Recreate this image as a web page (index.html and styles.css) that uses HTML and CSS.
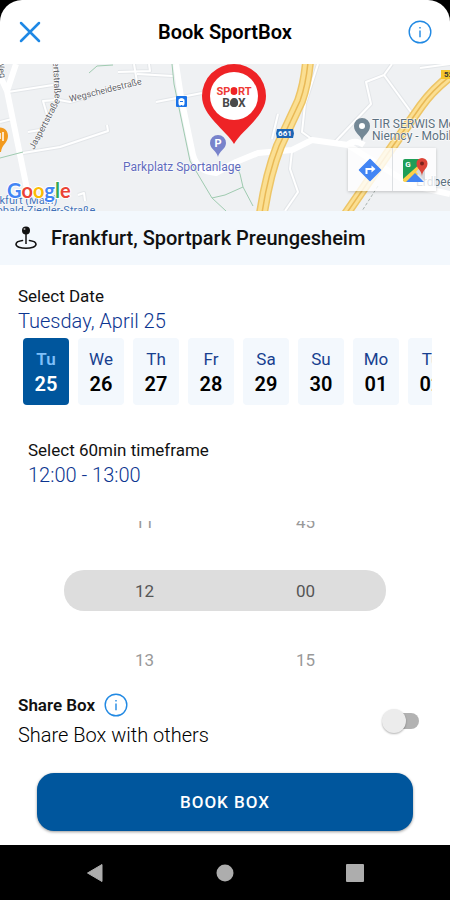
FILE: index.html
```
<!DOCTYPE html>
<html lang="en">
<head>
    <meta charset="UTF-8">
    <meta name="viewport" content="width=device-width, initial-scale=1.0">
    <title>Book SportBox</title>
    <link rel="stylesheet" href="styles.css">
</head>
<body>
    <div class="app">
        <header class="header">
            <button type="button" class="icon-btn" aria-label="Close">
                <svg width="24" height="24" viewBox="0 0 24 24"><path d="M3 3l18 18M21 3L3 21" stroke="#1e88e5" stroke-width="2.5" stroke-linecap="round"/></svg>
            </button>
            <h1>Book SportBox</h1>
            <button type="button" class="icon-btn" aria-label="Info">
                <svg width="24" height="24" viewBox="0 0 24 24" fill="none" stroke="#2189e3"><circle cx="12" cy="12" r="10.8" stroke-width="1.4"/><path d="M12 10.500v6.800M12 7v1.600" stroke-width="1.400"/></svg>
            </button>
        </header>

        <main>
            <section class="map">
                <svg class="map-canvas" viewBox="0 0 450 147" preserveAspectRatio="xMidYMid slice">
                    <rect width="450" height="147" fill="#eff1f3"/>

                    <!-- side streets -->
                    <g class="street-edge">
                        <path d="M54 0L56 33M56 36L43 37L48 54L40 66L28 68M54 35L70 38L137 18L134 0M118 8L150 7L149 0M137 10L173 12"/>
                        <path d="M8 28L53 21M0 58L12 55M23 89L60 83L108 67L107 61M156 38L202 29M78 131L84 129L85 137"/>
                        <path d="M318 0L305 40L302 68L313 76M392 0L384 11L366 18L371 40L335 78M384 11L411 48M292 87L290 105L298 128L285 147M278 50L272 75M420 4L450 0"/>
                    </g>
                    <g class="street">
                        <path d="M54 0L56 33M56 36L43 37L48 54L40 66L28 68M54 35L70 38L137 18L134 0M118 8L150 7L149 0M137 10L173 12"/>
                        <path d="M8 28L53 21M0 58L12 55M23 89L60 83L108 67L107 61M156 38L202 29M78 131L84 129L85 137"/>
                        <path d="M318 0L305 40L302 68L313 76M392 0L384 11L366 18L371 40L335 78M384 11L411 48M292 87L290 105L298 128L285 147M278 50L272 75M420 4L450 0"/>
                    </g>

                    <!-- main roads -->
                    <g class="road">
                        <path d="M16 0L7 27L28 130M0 12L7 27"/>
                        <path d="M176 0L181 33L193 91Q198 108 216 109L236 98L258 89L292 86L312 76L348 81L392 109L414 122L450 130"/>
                        <path d="M346 82Q354 74 364 81"/>
                    </g>

                    <!-- paths through the park -->
                    <g class="trail">
                        <path d="M89 9L97 2L113 1M172 0L174 20L190 97L212 134L225 131L243 123L240 110L236 102M243 123L253 142M212 134L226 147M0 94L23 88"/>
                        <path d="M378 122L362 147" stroke-dasharray="3 2" stroke="#aab4b0"/>
                    </g>

                    <!-- motorways -->
                    <g fill="none">
                        <path d="M308 -2Q306 20 300 37L279 82Q268 110 262 149" stroke="#edc567" stroke-width="12"/>
                        <path d="M308 -2Q306 20 300 37L279 82Q268 110 262 149" stroke="#fbdf92" stroke-width="9"/>
                        <path d="M308 -2Q306 20 300 37L279 82Q268 110 262 149" stroke="#e9b956" stroke-width="1.5"/>
                        <path d="M453 10Q433 25 421 42L388 89L346 150" stroke="#edc567" stroke-width="10"/>
                        <path d="M453 10Q433 25 421 42L388 89L346 150" stroke="#fbdf92" stroke-width="7"/>
                        <path d="M453 10Q433 25 421 42L388 89L346 150" stroke="#e9b956" stroke-width="1.5"/>
                    </g>

                    <!-- road shields -->
                    <path d="M277 65h16l1 4.500l-1 4.500h-16l-1-4.500z" fill="#1d65b5"/>
                    <text x="285" y="72" class="shield" fill="#fff">661</text>
                    <rect x="441" y="6" width="20" height="9" fill="#f5c52c"/>
                    <text x="451" y="13" class="shield" fill="#333">521</text>

                    <!-- bus stop -->
                    <rect x="176" y="32" width="11" height="11" rx="1" fill="#1a73e8"/>
                    <path d="M179 35.500q2.500-2 5 0v5h-5zM180 40v2M183 40v2" fill="#fff" stroke="#fff"/>
                    <path d="M180 37.500h3" stroke="#1a73e8"/>

                    <!-- street names -->
                    <text class="street-name" transform="translate(70 38) rotate(-14)">Wegscheidestraße</text>
                    <text class="street-name" transform="translate(34 86) rotate(-62)">Jaspertstraße</text>
                    <text class="street-name" transform="translate(52 -20) rotate(87)">Gelbertstraße</text>
                    <text class="street-name" transform="translate(-3 -3) rotate(80)">Weg</text>

                    <!-- places -->
                    <path d="M0 63.500c5 0 8 4 8 8.500 0 7-6 8-7 16h-2z" fill="#f29a1f"/>
                    <path d="M0 69v6M3 68v9" stroke="#fff" stroke-width="1.500"/>
                    <path d="M218 93c-1-6-8-8-8-14a8 8 0 0 1 16 0c0 6-7 8-8 14z" fill="#7883cb"/>
                    <text x="218" y="83" class="poi-letter">P</text>
                    <text x="123" y="107" class="place place-park">Parkplatz Sportanlage</text>
                    <path d="M362 77c-1-6-8-8-8-15a8 8 0 0 1 16 0c0 7-7 9-8 15z" fill="#748896"/>
                    <circle cx="362" cy="62" r="3" fill="#fff"/>
                    <text x="372" y="64" class="place">TIR SERWIS Mobil</text>
                    <text x="372" y="76" class="place">Niemcy - Mobilny</text>
                    <text x="416" y="122" class="place">Erdbeer</text>
                    <text x="-22" y="140" class="place place-transit">Frankfurt (Main)</text>
                    <text x="-22" y="150" class="place place-transit">Theobald-Ziegler-Straße</text>

                    <text x="7" y="134" class="google"><tspan fill="#4285f4">G</tspan><tspan fill="#ea4335">o</tspan><tspan fill="#fbbc05">o</tspan><tspan fill="#4285f4">g</tspan><tspan fill="#34a853">l</tspan><tspan fill="#ea4335">e</tspan></text>

                    <!-- SportBox marker -->
                    <path d="M234 80C226 66 202 52 202 32a32 32 0 0 1 64 0c0 20-24 34-32 48z" fill="#ee2326"/>
                    <circle cx="234" cy="32" r="24" fill="#fff"/>
                    <text x="234" y="31" class="logo" fill="#ee3a35">SPORT</text>
                    <text x="234" y="43" class="logo logo-box" fill="#4a4a4a">BOX</text>
                    <rect x="231" y="24" width="6" height="6" rx="1" fill="#ee2326"/>
                    <circle cx="234" cy="39" r="4" fill="#4a4a4a"/>
                </svg>
                <div class="map-tools">
                    <button type="button" aria-label="Directions">
                        <svg width="24" height="24" viewBox="0 0 24 24"><path d="M12 1.500L22.500 12L12 22.500L1.500 12z" fill="#4285f4" stroke="#4285f4" stroke-width="1.500" stroke-linejoin="round"/><path d="M8.500 16v-5h6" fill="none" stroke="#fff" stroke-width="2"/><path d="M13.500 7.500l4 3.500l-4 3.500z" fill="#fff"/></svg>
                    </button>
                    <button type="button" aria-label="Open in Google Maps">
                        <svg width="26" height="26" viewBox="0 0 26 26">
                            <path d="M3 3h20v20H3z" fill="#e8eaed"/>
                            <path d="M1 4q0-2 2-2h15v6L2 24q-1 0-1-2z" fill="#1e9e57"/>
                            <path d="M1 22L19 6l3 7L5 25H3q-2 0-2-2z" fill="#fdd04b"/>
                            <path d="M4 25l9-9l9 9z" fill="#4285f4"/>
                            <path d="M14 15l5-6l4 4v11z" fill="#d5d8dc"/>
                            <path d="M20 19c-.5-6-5.500-7-5.500-12.500a5.500 5.500 0 0 1 11 0C25.500 12 20.500 13 20 19z" fill="#dc4437"/>
                            <circle cx="20" cy="6.500" r="2" fill="#7b231c"/>
                            <text x="6" y="10" class="maps-g">G</text>
                        </svg>
                    </button>
                </div>
            </section>

            <section class="location">
                <svg width="22" height="24" viewBox="0 0 22 24" fill="none" stroke="#111">
                    <circle cx="11" cy="4.500" r="4" fill="#111" stroke="none"/>
                    <circle cx="9.500" cy="3" r="1" fill="#aaa" stroke="none"/>
                    <path d="M11 8v10" stroke-width="1.500"/>
                    <path d="M7.500 14.500C3.500 15 1 16.500 1 18.300C1 20.700 5.500 22.300 11 22.300s10-1.600 10-4c0-1.800-2.500-3.300-6.500-3.800" stroke-width="1.600" stroke-linecap="round"/>
                </svg>
                <h2>Frankfurt, Sportpark Preungesheim</h2>
            </section>

            <section class="date">
                <p class="label">Select Date</p>
                <p class="value">Tuesday, April 25</p>
                <div class="days">
                    <button type="button" class="day active"><span>Tu</span><b>25</b></button>
                    <button type="button" class="day"><span>We</span><b>26</b></button>
                    <button type="button" class="day"><span>Th</span><b>27</b></button>
                    <button type="button" class="day"><span>Fr</span><b>28</b></button>
                    <button type="button" class="day"><span>Sa</span><b>29</b></button>
                    <button type="button" class="day"><span>Su</span><b>30</b></button>
                    <button type="button" class="day"><span>Mo</span><b>01</b></button>
                    <button type="button" class="day"><span>Tu</span><b>02</b></button>
                </div>
            </section>

            <section class="time">
                <p class="label">Select 60min timeframe</p>
                <p class="value">12:00 - 13:00</p>
            </section>

            <div class="picker">
                <div class="picker-row"><span>11</span><span>45</span></div>
                <div class="picker-row selected"><span>12</span><span>00</span></div>
                <div class="picker-row"><span>13</span><span>15</span></div>
            </div>

            <section class="share">
                <div class="share-text">
                    <div class="share-title">
                        <h3>Share Box</h3>
                        <button type="button" class="icon-btn" aria-label="About sharing">
                            <svg width="24" height="24" viewBox="0 0 24 24" fill="none" stroke="#2189e3"><circle cx="12" cy="12" r="10.8" stroke-width="1.4"/><path d="M12 10.500v6.800M12 7v1.600" stroke-width="1.400"/></svg>
                        </button>
                    </div>
                    <label for="share">Share Box with others</label>
                </div>
                <input type="checkbox" id="share" class="switch" role="switch">
            </section>

            <div class="action">
                <button type="submit" class="book">BOOK BOX</button>
            </div>
        </main>
    </div>

    <nav class="navbar">
        <button type="button" aria-label="Back"><svg width="20" height="20" viewBox="0 0 20 20"><path d="M2.500 10L17 1.500v17z" fill="#adadad" stroke="#adadad" stroke-linejoin="round"/></svg></button>
        <button type="button" aria-label="Home"><svg width="20" height="20" viewBox="0 0 20 20"><circle cx="10" cy="10" r="8.500" fill="#adadad"/></svg></button>
        <button type="button" aria-label="Recent apps"><svg width="20" height="20" viewBox="0 0 20 20"><rect x="1" y="1" width="18" height="18" rx="1" fill="#adadad"/></svg></button>
    </nav>
</body>
</html>
```
FILE: styles.css
```
* {
    box-sizing: border-box;
}

body {
    font-family: Roboto, "Liberation Sans", sans-serif;
    background-color: #000;
    color: #111;
    margin: 0;
    min-height: 100vh;
    display: flex;
    flex-direction: column;
}

h1, h2, h3, p {
    margin: 0;
}

button {
    font-family: inherit;
    border: none;
    background: none;
    padding: 0;
    cursor: pointer;
}

svg {
    display: block;
}

.app {
    flex: 1;
    background-color: #fff;
    border-radius: 22px 22px 0 0;
}

/* header */
.header {
    display: flex;
    align-items: center;
    justify-content: space-between;
    height: 64px;
    padding: 0 18px;
}

.header h1 {
    font-size: 20px;
    font-weight: 600;
    line-height: 26px;
    color: #000;
}

/* map */
.map {
    position: relative;
    height: 147px;
    overflow: hidden;
}

.map-canvas {
    width: 100%;
    height: 100%;
}

.street-edge, .street, .road, .trail {
    fill: none;
    stroke-linejoin: round;
}

.street-edge {
    stroke: #e3e6e9;
    stroke-width: 4;
}

.street {
    stroke: #fff;
    stroke-width: 2;
}

.road {
    stroke: #fff;
    stroke-width: 6;
}

.trail {
    stroke: #9fcbb0;
    stroke-width: 1;
}

.shield {
    font-size: 8px;
    font-weight: 700;
    text-anchor: middle;
}

.street-name {
    font-size: 9px;
    fill: #5f6368;
    stroke: #fff;
    stroke-width: 1px;
    paint-order: stroke;
}

.place {
    font-size: 12px;
    fill: #5b7080;
    stroke: #fff;
    stroke-width: 1px;
    paint-order: stroke;
}

.place-park {
    fill: #5f6bbd;
}

.place-transit {
    font-size: 11px;
    fill: #4272b8;
}

.poi-letter {
    font-size: 11px;
    font-weight: 700;
    fill: #fff;
    text-anchor: middle;
}

.google {
    font-family: Lato, sans-serif;
    font-size: 20px;
    font-weight: 700;
    stroke: #fff;
    stroke-width: 2px;
    paint-order: stroke;
}

.logo {
    font-size: 11px;
    font-weight: 700;
    text-anchor: middle;
}

.logo-box {
    font-size: 12px;
}

.maps-g {
    font-size: 8px;
    font-weight: 700;
    fill: #fff;
    text-anchor: middle;
}

.map-tools {
    position: absolute;
    right: 14px;
    bottom: 20px;
    display: flex;
    background-color: rgba(255, 255, 255, 0.8);
    box-shadow: 0 1px 3px rgba(0, 0, 0, 0.2);
}

.map-tools button {
    display: flex;
    align-items: center;
    justify-content: center;
    width: 44px;
    height: 43px;
}

.map-tools button + button {
    border-left: 1px solid #dcdfe2;
}

/* location */
.location {
    display: flex;
    align-items: center;
    gap: 14px;
    min-height: 54px;
    padding: 0 15px;
    background-color: #f3f8fd;
}

.location h2 {
    font-size: 20px;
    font-weight: 500;
}

/* date and time */
.label {
    font-size: 17px;
    line-height: 22px;
}

.value {
    font-size: 20px;
    font-weight: 300;
    line-height: 28px;
    color: #0c3590;
}

.date {
    padding: 20px 18px 0;
}

.days {
    display: flex;
    gap: 9px;
    margin-top: 3px;
    padding-left: 5px;
    overflow: hidden;
}

.day {
    flex: 0 0 46px;
    display: flex;
    flex-direction: column;
    align-items: center;
    padding: 9px 0 8px;
    border-radius: 4px;
    background-color: #f3f8fd;
    color: #17408f;
    font-size: 17px;
    line-height: 25px;
}

.day b {
    font-size: 20px;
    font-weight: 600;
    color: #000;
}

.day.active {
    background-color: #00569d;
    color: #7fc0fa;
    font-weight: 600;
}

.day.active b {
    color: #fff;
}

.time {
    padding: 34px 28px 0;
}

/* time picker */
.picker {
    display: flex;
    flex-direction: column;
    justify-content: center;
    gap: 28px;
    height: 150px;
    margin: 32px 64px 0;
    padding-bottom: 11px;
    overflow: hidden;
}

.picker-row {
    flex: none;
    display: grid;
    grid-template-columns: 1fr 1fr;
    align-items: center;
    height: 41px;
    border-radius: 20px;
    font-size: 17px;
    text-align: center;
    color: #999;
}

.picker-row.selected {
    background-color: #ddd;
    color: #555;
}

/* share */
.share {
    display: flex;
    align-items: center;
    justify-content: space-between;
    padding: 22px 31px 0 18px;
}

.share-title {
    display: flex;
    align-items: center;
    gap: 9px;
}

.share h3 {
    font-size: 17px;
    font-weight: 600;
}

.share label {
    display: block;
    margin-top: 4px;
    font-size: 20px;
    font-weight: 300;
    line-height: 28px;
    color: #000;
}

.switch {
    appearance: none;
    position: relative;
    width: 34px;
    height: 16px;
    margin: 0;
    border-radius: 8px;
    background-color: #b2b2b2;
}

.switch::before {
    content: "";
    position: absolute;
    top: -4px;
    left: -3px;
    width: 24px;
    height: 24px;
    border-radius: 50%;
    background-color: #ececec;
    box-shadow: 0 1px 2px rgba(0, 0, 0, 0.3);
}

.switch:checked::before {
    left: 14px;
    background-color: #00569d;
}

.action {
    padding: 24px 37px 14px;
}

.book {
    width: 100%;
    height: 58px;
    border-radius: 17px;
    background-color: #00569d;
    box-shadow: 0 1px 3px rgba(0, 0, 0, 0.4);
    color: #fff;
    font-size: 17px;
    font-weight: 500;
    letter-spacing: 1px;
}

/* system navigation */
.navbar {
    display: grid;
    grid-template-columns: repeat(3, 1fr);
    height: 55px;
    padding: 0 30px;
}

.navbar button {
    display: flex;
    align-items: center;
    justify-content: center;
}
```
